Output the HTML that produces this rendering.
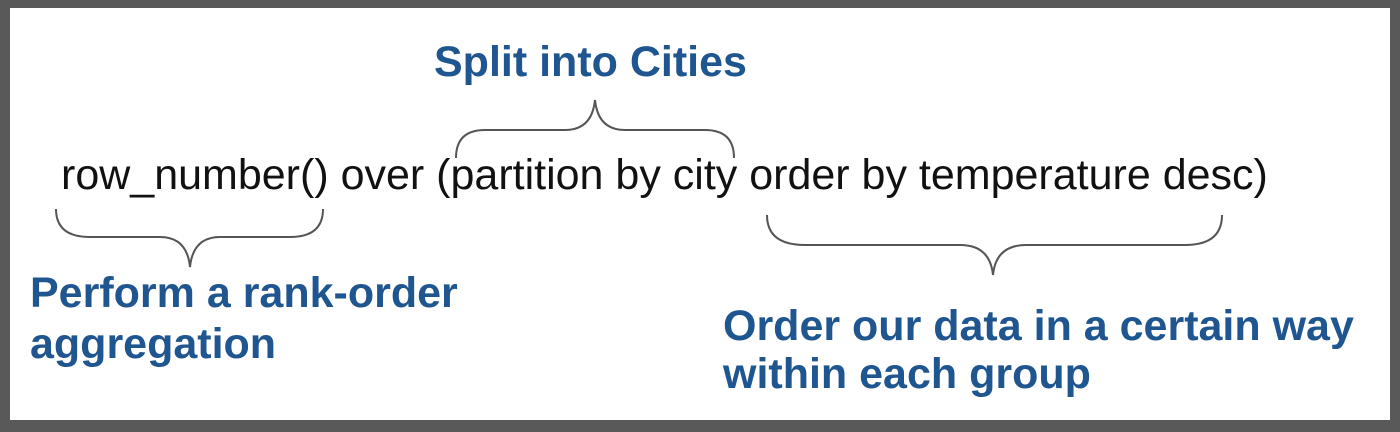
<!DOCTYPE html>
<html><head><style>
body{margin:0;width:1400px;height:432px;overflow:hidden;background:#fff;font-family:"Liberation Sans",sans-serif}
.frame{position:absolute;left:0;top:0;width:1380px;height:412px;border:10px solid #595959;border-top-width:8px;border-bottom-width:12px;background:#fff}
.t{position:absolute;white-space:nowrap;line-height:1}
.code{font-size:43px;color:#111;left:61px;top:154px}
.b{font-weight:bold;color:#1f5690;font-size:43px}
</style></head><body>
<div class="frame"></div>
<div class="t b" style="left:434px;top:41px">Split into Cities</div>
<div class="t code">row_number() over (partition by city order by temperature desc)</div>
<div class="t b" style="left:30px;top:272px">Perform a rank-order</div>
<div class="t b" style="left:30px;top:323px">aggregation</div>
<div class="t b" style="left:723px;top:305px">Order our data in a certain way</div>
<div class="t b" style="left:723px;top:353px">within each group</div>
<svg width="1400" height="432" style="position:absolute;left:0;top:0" fill="none" stroke="#555" stroke-width="2">
<path d="M456 158 Q456 130 485 130 L565 130 Q592 130 595 100 Q598 130 625 130 L705 130 Q734 130 734 158"/>
<path d="M56 209 Q56 237 90 237 L160 237 Q187 237 190 267 Q193 237 220 237 L290 237 Q323 237 323 209"/>
<path d="M767 215 Q767 245 805 245 L960 245 Q990 245 993 275 Q996 245 1026 245 L1185 245 Q1222 245 1222 215"/>
</svg>
</body></html>
